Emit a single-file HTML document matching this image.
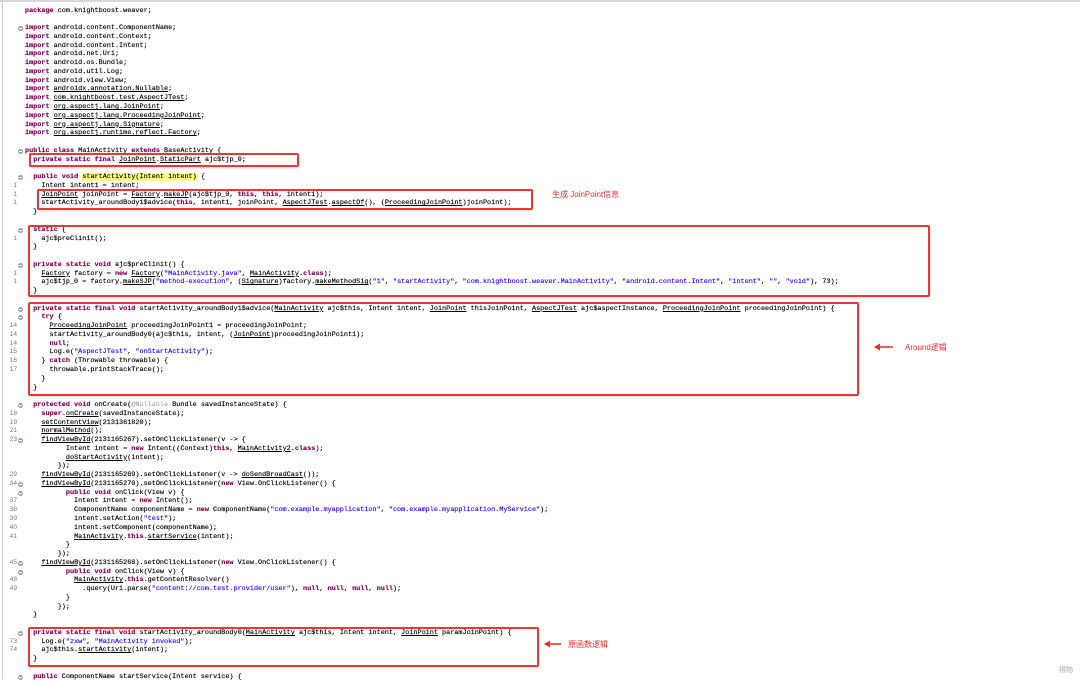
<!DOCTYPE html>
<html><head><meta charset="utf-8"><style>
html,body{margin:0;padding:0;background:#fff;}
body{width:1080px;height:679px;position:relative;overflow:hidden;}
#top{position:absolute;left:0;top:0;width:1080px;height:2px;background:#d8d8d8;}
#lft{position:absolute;left:2px;top:0;width:1px;height:679px;background:#cfcfcf;}
#code{position:absolute;left:0;top:6.6px;font-family:"Liberation Mono",monospace;font-size:6.82px;line-height:8.77px;color:#000;-webkit-text-stroke:0.15px #000;}
.l{position:relative;height:8.77px;padding-left:25px;white-space:pre;}
.n{position:absolute;left:0;width:17px;text-align:right;color:#7a7a7a;font-style:normal;font-family:"Liberation Sans",sans-serif;font-size:6.6px;-webkit-text-stroke:0;}
.f{position:absolute;left:18px;top:2px;width:5px;height:5px;border-radius:50%;background:#93a3b3;}
.f:after{content:"";position:absolute;left:1px;top:2px;width:3px;height:1px;background:#fff;}
k{color:#7f0055;font-weight:bold;-webkit-text-stroke:0.15px #7f0055;}
s{color:#2a00ff;text-decoration:none;-webkit-text-stroke:0.15px #2a00ff;}
u{text-decoration:underline;}
.hl{background:#ffff80;}
.an{color:#999;-webkit-text-stroke:0;}
.box{position:absolute;border:2px solid #e53935;border-radius:2px;box-shadow:0 1px 2px rgba(0,0,0,.15);}
.lab{position:absolute;color:#e2302c;font-family:"Liberation Sans","Noto Sans CJK SC",sans-serif;font-size:8px;}
</style></head><body>
<div id="top"></div><div id="lft"></div>
<div id="code">
<div class="l"><k>package</k> com.knightboost.weaver;</div>
<div class="l"></div>
<div class="l"><b class="f"></b><k>import</k> android.content.ComponentName;</div>
<div class="l"><k>import</k> android.content.Context;</div>
<div class="l"><k>import</k> android.content.Intent;</div>
<div class="l"><k>import</k> android.net.Uri;</div>
<div class="l"><k>import</k> android.os.Bundle;</div>
<div class="l"><k>import</k> android.util.Log;</div>
<div class="l"><k>import</k> android.view.View;</div>
<div class="l"><k>import</k> <u>androidx.annotation.Nullable</u>;</div>
<div class="l"><k>import</k> <u>com.knightboost.test.AspectJTest</u>;</div>
<div class="l"><k>import</k> <u>org.aspectj.lang.JoinPoint</u>;</div>
<div class="l"><k>import</k> <u>org.aspectj.lang.ProceedingJoinPoint</u>;</div>
<div class="l"><k>import</k> <u>org.aspectj.lang.Signature</u>;</div>
<div class="l"><k>import</k> <u>org.aspectj.runtime.reflect.Factory</u>;</div>
<div class="l"></div>
<div class="l"><b class="f"></b><k>public class</k> MainActivity <k>extends</k> BaseActivity {</div>
<div class="l">  <k>private static final</k> <u>JoinPoint</u>.<u>StaticPart</u> ajc$tjp_0;</div>
<div class="l"></div>
<div class="l"><b class="f"></b>  <k>public void</k> <span class="hl">startActivity(Intent intent)</span> {</div>
<div class="l"><i class="n">1</i>    Intent intent1 = intent;</div>
<div class="l"><i class="n">1</i>    <u>JoinPoint</u> joinPoint = <u>Factory</u>.<u>makeJP</u>(ajc$tjp_0, <k>this</k>, <k>this</k>, intent1);</div>
<div class="l"><i class="n">1</i>    startActivity_aroundBody1$advice(<k>this</k>, intent1, joinPoint, <u>AspectJTest</u>.<u>aspectOf</u>(), (<u>ProceedingJoinPoint</u>)joinPoint);</div>
<div class="l">  }</div>
<div class="l"></div>
<div class="l"><b class="f"></b>  <k>static</k> {</div>
<div class="l"><i class="n">1</i>    ajc$preClinit();</div>
<div class="l">  }</div>
<div class="l"></div>
<div class="l"><b class="f"></b>  <k>private static void</k> ajc$preClinit() {</div>
<div class="l"><i class="n">1</i>    <u>Factory</u> factory = <k>new</k> <u>Factory</u>(<s>"MainActivity.java"</s>, <u>MainActivity</u>.<k>class</k>);</div>
<div class="l"><i class="n">1</i>    ajc$tjp_0 = factory.<u>makeSJP</u>(<s>"method-execution"</s>, (<u>Signature</u>)factory.<u>makeMethodSig</u>(<s>"1"</s>, <s>"startActivity"</s>, <s>"com.knightboost.weaver.MainActivity"</s>, <s>"android.content.Intent"</s>, <s>"intent"</s>, <s>""</s>, <s>"void"</s>), 73);</div>
<div class="l">  }</div>
<div class="l"></div>
<div class="l"><b class="f"></b>  <k>private static final void</k> startActivity_aroundBody1$advice(<u>MainActivity</u> ajc$this, Intent intent, <u>JoinPoint</u> thisJoinPoint, <u>AspectJTest</u> ajc$aspectInstance, <u>ProceedingJoinPoint</u> proceedingJoinPoint) {</div>
<div class="l"><b class="f"></b>    <k>try</k> {</div>
<div class="l"><i class="n">14</i>      <u>ProceedingJoinPoint</u> proceedingJoinPoint1 = proceedingJoinPoint;</div>
<div class="l"><i class="n">14</i>      startActivity_aroundBody0(ajc$this, intent, (<u>JoinPoint</u>)proceedingJoinPoint1);</div>
<div class="l"><i class="n">14</i>      <k>null</k>;</div>
<div class="l"><i class="n">15</i>      Log.e(<s>"AspectJTest"</s>, <s>"onStartActivity"</s>);</div>
<div class="l"><i class="n">16</i>    } <k>catch</k> (Throwable throwable) {</div>
<div class="l"><i class="n">17</i>      throwable.printStackTrace();</div>
<div class="l">    }</div>
<div class="l">  }</div>
<div class="l"></div>
<div class="l"><b class="f"></b>  <k>protected void</k> onCreate(<span class="an">@Nullable</span> Bundle savedInstanceState) {</div>
<div class="l"><i class="n">18</i>    <k>super</k>.<u>onCreate</u>(savedInstanceState);</div>
<div class="l"><i class="n">19</i>    <u>setContentView</u>(2131361820);</div>
<div class="l"><i class="n">21</i>    <u>normalMethod</u>();</div>
<div class="l"><i class="n">23</i><b class="f"></b>    <u>findViewById</u>(2131165267).setOnClickListener(v -&gt; {</div>
<div class="l">          Intent intent = <k>new</k> Intent((Context)<k>this</k>, <u>MainActivity2</u>.<k>class</k>);</div>
<div class="l">          <u>doStartActivity</u>(intent);</div>
<div class="l">        });</div>
<div class="l"><i class="n">29</i>    <u>findViewById</u>(2131165269).setOnClickListener(v -&gt; <u>doSendBroadCast</u>());</div>
<div class="l"><i class="n">34</i><b class="f"></b>    <u>findViewById</u>(2131165270).setOnClickListener(<k>new</k> View.OnClickListener() {</div>
<div class="l"><b class="f"></b>          <k>public void</k> onClick(View v) {</div>
<div class="l"><i class="n">37</i>            Intent intent = <k>new</k> Intent();</div>
<div class="l"><i class="n">38</i>            ComponentName componentName = <k>new</k> ComponentName(<s>"com.example.myapplication"</s>, <s>"com.example.myapplication.MyService"</s>);</div>
<div class="l"><i class="n">39</i>            intent.setAction(<s>"test"</s>);</div>
<div class="l"><i class="n">40</i>            intent.setComponent(componentName);</div>
<div class="l"><i class="n">41</i>            <u>MainActivity</u>.<k>this</k>.<u>startService</u>(intent);</div>
<div class="l">          }</div>
<div class="l">        });</div>
<div class="l"><i class="n">45</i><b class="f"></b>    <u>findViewById</u>(2131165268).setOnClickListener(<k>new</k> View.OnClickListener() {</div>
<div class="l"><b class="f"></b>          <k>public void</k> onClick(View v) {</div>
<div class="l"><i class="n">48</i>            <u>MainActivity</u>.<k>this</k>.getContentResolver()</div>
<div class="l"><i class="n">49</i>              .query(Uri.parse(<s>"content://com.test.provider/user"</s>), <k>null</k>, <k>null</k>, <k>null</k>, <k>null</k>);</div>
<div class="l">          }</div>
<div class="l">        });</div>
<div class="l">  }</div>
<div class="l"></div>
<div class="l"><b class="f"></b>  <k>private static final void</k> startActivity_aroundBody0(<u>MainActivity</u> ajc$this, Intent intent, <u>JoinPoint</u> paramJoinPoint) {</div>
<div class="l"><i class="n">73</i>    Log.e(<s>"zxw"</s>, <s>"MainActivity invoked"</s>);</div>
<div class="l"><i class="n">74</i>    ajc$this.<u>startActivity</u>(intent);</div>
<div class="l">  }</div>
<div class="l"></div>
<div class="l"><b class="f"></b>  <k>public</k> ComponentName startService(Intent service) {</div>
</div>

<div class="box" style="left:29px;top:153px;width:266px;height:10px;"></div>
<div class="box" style="left:37px;top:189px;width:492px;height:17px;"></div>
<div class="box" style="left:28px;top:225px;width:898px;height:68px;"></div>
<div class="box" style="left:28px;top:302px;width:827px;height:90px;"></div>
<div class="box" style="left:28px;top:627px;width:507px;height:36px;"></div>

<div class="lab" style="left:552px;top:189px;">生成 JoinPoint信息</div>
<svg style="position:absolute;left:873px;top:342px" width="22" height="10"><path d="M2 5H20" stroke="#e2302c" stroke-width="1.6"/><path d="M1 5L7 1.5V8.5Z" fill="#e2302c"/></svg>
<div class="lab" style="left:905px;top:342px;">Around逻辑</div>
<svg style="position:absolute;left:543px;top:639px" width="20" height="10"><path d="M2 5H18" stroke="#e2302c" stroke-width="1.6"/><path d="M1 5L7 1.5V8.5Z" fill="#e2302c"/></svg>
<div class="lab" style="left:568px;top:639px;">原函数逻辑</div>
<div style="position:absolute;left:1059px;top:665px;color:#aaa;font-family:'Noto Sans CJK SC',sans-serif;font-size:7px;">得物</div>
</body></html>
